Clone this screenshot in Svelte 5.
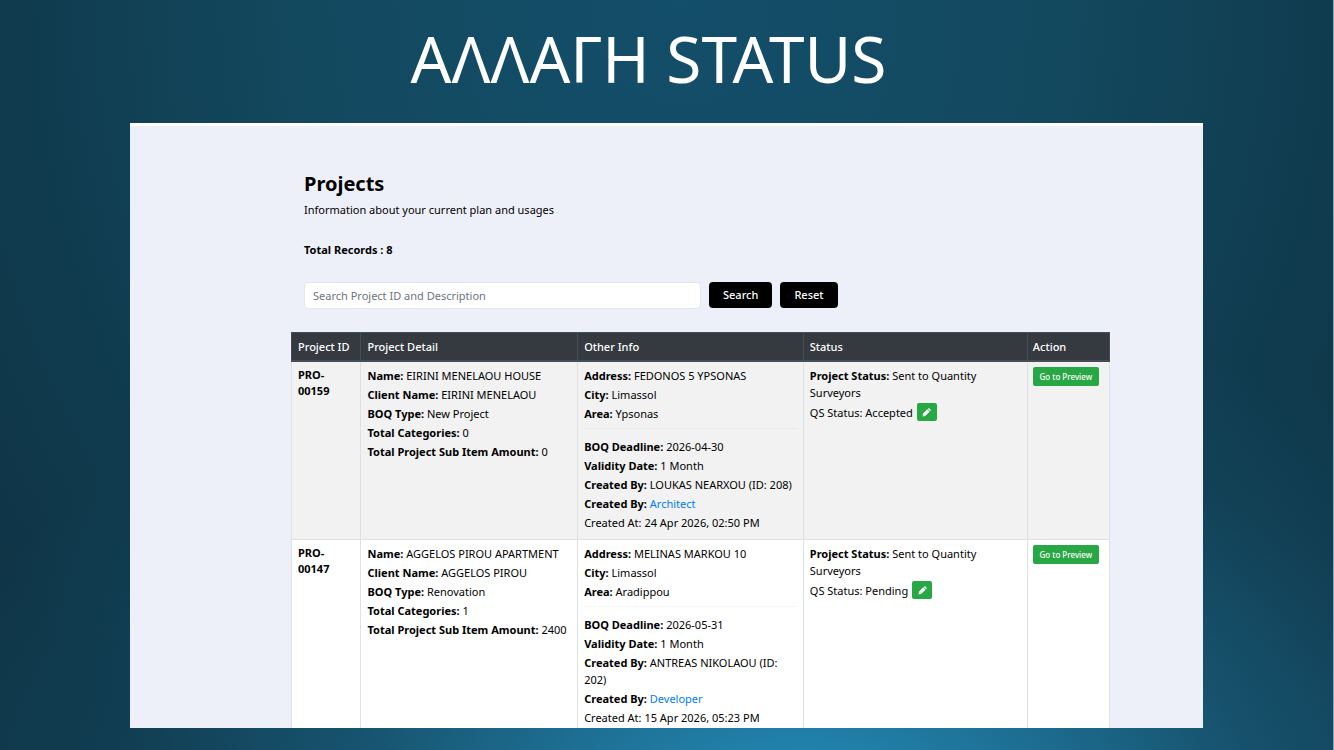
<script lang="ts">
  interface Project {
    id: string;
    name: string;
    client: string;
    boqType: string;
    categories: number;
    amount: number;
    address: string;
    city: string;
    area: string;
    deadline: string;
    validity: string;
    createdBy: string;
    role: string;
    createdAt: string;
    status: string;
    qsStatus: string;
  }

  const totalRecords = 8;

  const projects: Project[] = [
    {
      id: 'PRO-00159',
      name: 'EIRINI MENELAOU HOUSE',
      client: 'EIRINI MENELAOU',
      boqType: 'New Project',
      categories: 0,
      amount: 0,
      address: 'FEDONOS 5 YPSONAS',
      city: 'Limassol',
      area: 'Ypsonas',
      deadline: '2026-04-30',
      validity: '1 Month',
      createdBy: 'LOUKAS NEARXOU (ID: 208)',
      role: 'Architect',
      createdAt: '24 Apr 2026, 02:50 PM',
      status: 'Sent to Quantity Surveyors',
      qsStatus: 'Accepted'
    },
    {
      id: 'PRO-00147',
      name: 'AGGELOS PIROU APARTMENT',
      client: 'AGGELOS PIROU',
      boqType: 'Renovation',
      categories: 1,
      amount: 2400,
      address: 'MELINAS MARKOU 10',
      city: 'Limassol',
      area: 'Aradippou',
      deadline: '2026-05-31',
      validity: '1 Month',
      createdBy: 'ANTREAS NIKOLAOU (ID: 202)',
      role: 'Developer',
      createdAt: '15 Apr 2026, 05:23 PM',
      status: 'Sent to Quantity Surveyors',
      qsStatus: 'Pending'
    }
  ];

  let search = $state('');
</script>

<div class="slide">
  <h1>ΑΛΛΑΓΗ STATUS</h1>

  <main class="panel">
    <div class="content">
      <header class="intro">
        <h2>Projects</h2>
        <p>Information about your current plan and usages</p>
        <p class="total">Total Records : {totalRecords}</p>
        <form class="search" onsubmit={(e) => e.preventDefault()}>
          <input
            type="text"
            aria-label="Search Project ID and Description"
            placeholder="Search Project ID and Description"
            bind:value={search}
          />
          <button type="submit">Search</button>
          <button type="button" onclick={() => (search = '')}>Reset</button>
        </form>
      </header>

      <table>
        <colgroup>
          <col class="col-id" />
          <col class="col-detail" />
          <col class="col-info" />
          <col class="col-status" />
          <col class="col-action" />
        </colgroup>
        <thead>
          <tr>
            <th>Project ID</th>
            <th>Project Detail</th>
            <th>Other Info</th>
            <th>Status</th>
            <th>Action</th>
          </tr>
        </thead>
        <tbody>
          {#each projects as project (project.id)}
            <tr>
              <td class="id">{project.id}</td>
              <td>
                <p><b>Name:</b> {project.name}</p>
                <p><b>Client Name:</b> {project.client}</p>
                <p><b>BOQ Type:</b> {project.boqType}</p>
                <p><b>Total Categories:</b> {project.categories}</p>
                <p><b>Total Project Sub Item Amount:</b> {project.amount}</p>
              </td>
              <td>
                <p><b>Address:</b> {project.address}</p>
                <p><b>City:</b> {project.city}</p>
                <p><b>Area:</b> {project.area}</p>
                <hr />
                <p><b>BOQ Deadline:</b> {project.deadline}</p>
                <p><b>Validity Date:</b> {project.validity}</p>
                <p><b>Created By:</b> {project.createdBy}</p>
                <p><b>Created By:</b> <a href="#role">{project.role}</a></p>
                <p>Created At: {project.createdAt}</p>
              </td>
              <td>
                <p><b>Project Status:</b> {project.status}</p>
                <div class="qs">
                  <span>QS Status: {project.qsStatus}</span>
                  <button class="edit" type="button" aria-label="Edit QS status">
                    <svg viewBox="0 0 16 16" width="9" height="9" aria-hidden="true">
                      <path
                        fill="#fff"
                        d="M9.4 2.4 13.6 6.6 5.4 14.4 1.2 15 1.6 10.4ZM10.4 1.6 11.6.6Q12.6 0 13.4.8L15.2 2.6Q16 3.4 15.2 4.4L14.4 5.6Z"
                      />
                    </svg>
                  </button>
                </div>
              </td>
              <td class="action"><button class="preview" type="button">Go to Preview</button></td>
            </tr>
          {/each}
        </tbody>
      </table>
    </div>
  </main>
</div>

<style>
  :global(body) {
    margin: 0;
  }

  .slide {
    box-sizing: border-box;
    height: 100vh;
    padding: 0 9.75% 22px;
    border-right: 1px solid #8fa5b0;
    display: flex;
    flex-direction: column;
    overflow: hidden;
    background:
      radial-gradient(
        ellipse 68% 66% at 60% 106%,
        #248bb8 0%,
        rgba(32, 122, 162, 0.85) 25%,
        rgba(28, 104, 138, 0.55) 50%,
        rgba(24, 90, 120, 0.22) 76%,
        rgba(24, 88, 116, 0) 100%
      ),
      radial-gradient(ellipse 62% 130% at 51% 0%, #134e6a 0%, #13495f 45%, #103b4e 80%, #0f3547 100%);
    font-family: 'Noto Sans', sans-serif;
    font-size: 11px;
    line-height: 17px;
    color: #000;
  }

  h1 {
    margin: 0;
    padding-right: 36px;
    height: 123px;
    line-height: 117px;
    flex: none;
    font-size: 64px;
    font-weight: 400;
    text-align: center;
    color: #fff;
  }

  .panel {
    flex: 1;
    min-height: 0;
    overflow: hidden;
    border-top: 3px solid #fff;
    background: #eef0f9;
  }

  .content {
    padding: 44px 8.7% 0 15%;
  }

  .intro {
    padding: 0 12px 23px 13px;
  }

  h2 {
    margin: 0 0 4px;
    font-size: 20px;
    line-height: 27px;
  }

  p {
    margin: 0;
  }

  .total {
    margin: 23px 0 24px;
    font-weight: 700;
  }

  .search {
    display: flex;
    gap: 8px;
  }

  .search input {
    box-sizing: border-box;
    flex: 0 1 397px;
    min-width: 0;
    height: 27px;
    padding: 0 8px;
    border: 1px solid #e4e6ec;
    border-radius: 4px;
    background: #fff;
    font: inherit;
  }

  .search input::placeholder {
    color: #6c757d;
    opacity: 1;
  }

  button {
    border: 0;
    font: inherit;
    color: #fff;
    cursor: pointer;
  }

  .search button {
    height: 26px;
    padding: 0 14px 1px;
    border-radius: 4px;
    background: #000;
    font-weight: 500;
  }

  table {
    width: 100%;
    table-layout: fixed;
    border-collapse: collapse;
    background: #fff;
  }

  .col-id {
    width: 8.5%;
  }

  .col-detail {
    width: 26.5%;
  }

  .col-info {
    width: 27.6%;
  }

  .col-status {
    width: 27.4%;
  }

  .col-action {
    width: 10%;
  }

  th {
    padding: 6px 6px 5px;
    border: 1px solid #454d55;
    border-bottom-width: 2px;
    background: #343a40;
    color: #fff;
    font-weight: 500;
    line-height: 16px;
    text-align: left;
  }

  td {
    padding: 5px 6px 6px;
    border: 1px solid #dee2e6;
    vertical-align: top;
  }

  th:last-child,
  .action {
    padding-left: 5px;
  }

  tbody tr:nth-child(odd) {
    background: #f2f2f2;
  }

  .id {
    font-weight: 700;
    line-height: 16px;
  }

  td p {
    margin-bottom: 2px;
  }

  hr {
    margin: 6px 0 9px;
    border: 0;
    border-top: 1px solid rgba(0, 0, 0, 0.03);
  }

  a {
    color: #007bff;
    text-decoration: none;
  }

  .qs {
    display: flex;
    align-items: center;
    gap: 4px;
  }

  .edit {
    display: grid;
    place-items: center;
    width: 20px;
    height: 18px;
    padding: 0;
    border-radius: 2px;
    background: #28a745;
  }

  .preview {
    display: block;
    width: 66px;
    height: 19px;
    padding: 0;
    border-radius: 2px;
    background: #28a745;
    font-size: 8px;
    font-weight: 500;
    white-space: nowrap;
  }
</style>
